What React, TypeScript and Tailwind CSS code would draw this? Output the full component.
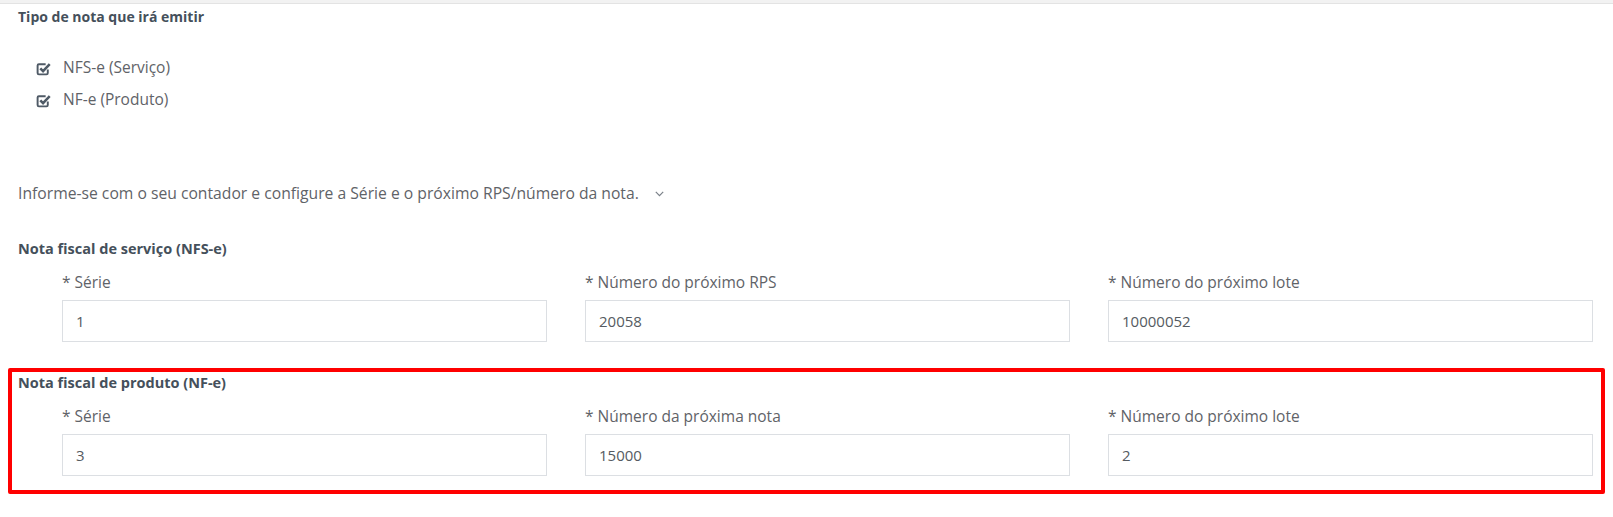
import React from 'react';

const CheckIcon = () => (
  <svg width="15" height="15" viewBox="0 0 14 14" fill="none" className="shrink-0">
    <path
      d="M11 8v3.3a1.2 1.2 0 0 1-1.2 1.2H2.7a1.2 1.2 0 0 1-1.2-1.2V4.2A1.2 1.2 0 0 1 2.7 3H9"
      stroke="#4f5a66"
      strokeWidth="1.8"
    />
    <path d="M4 6.8l2.6 2.6L12.8 3" stroke="#4f5a66" strokeWidth="2.4" />
  </svg>
);

type Field = { label: string; value: string };

const Section = ({ title, fields, highlight }: { title: string; fields: Field[]; highlight?: boolean }) => (
  <div
    className={`-mx-[10px] px-[6px] pt-[1px] pb-[14px] border-4 ${
      highlight ? 'border-[#ff0000] rounded-[2px]' : 'border-transparent'
    }`}
  >
    <h4 className="font-bold text-[14.5px] leading-[20px] text-[#45505b]">{title}</h4>
    <div className="grid grid-cols-3 gap-x-[38px] pl-[44px] pr-[2px] mt-[13px]">
      {fields.map((f) => (
        <div key={f.label}>
          <div className="leading-[20px] text-[#5f6368]">* {f.label}</div>
          <div className="mt-[8px] h-[42px] border border-[#dcdfe3] flex items-center px-[13px] text-[15px] text-[#555b61]">
            {f.value}
          </div>
        </div>
      ))}
    </div>
  </div>
);

export default function App() {
  return (
    <div className="w-[1613px] h-[517px] bg-white overflow-hidden font-['Open_Sans',sans-serif] text-[15.5px] text-[#5f6368]">
      <div className="h-[4px] bg-[#f2f2f2] border-b border-[#e3e3e3]" />
      <div className="px-[18px]">
        <h3 className="mt-[3px] font-bold text-[14px] leading-[20px] text-[#45505b]">Tipo de nota que irá emitir</h3>

        <div className="mt-[25px] pl-[18px]">
          <label className="h-[32px] flex items-center gap-[12px]">
            <CheckIcon />
            <span>NFS-e (Serviço)</span>
          </label>
          <label className="h-[32px] flex items-center gap-[12px]">
            <CheckIcon />
            <span>NF-e (Produto)</span>
          </label>
        </div>

        <div className="mt-[67px] flex items-center leading-[20px] text-[15.7px]">
          <span>Informe-se com o seu contador e configure a Série e o próximo RPS/número da nota.</span>
          <svg width="9" height="6" viewBox="0 0 9 6" className="ml-[16px] mt-[1px]" fill="none">
            <path d="M0.8 0.8L4.5 4.6L8.2 0.8" stroke="#7a8088" strokeWidth="1.2" />
          </svg>
        </div>

        <div className="mt-[31px]">
          <Section
            title="Nota fiscal de serviço (NFS-e)"
            fields={[
              { label: 'Série', value: '1' },
              { label: 'Número do próximo RPS', value: '20058' },
              { label: 'Número do próximo lote', value: '10000052' },
            ]}
          />
        </div>

        <div className="mt-[8px]">
          <Section
            highlight
            title="Nota fiscal de produto (NF-e)"
            fields={[
              { label: 'Série', value: '3' },
              { label: 'Número da próxima nota', value: '15000' },
              { label: 'Número do próximo lote', value: '2' },
            ]}
          />
        </div>
      </div>
    </div>
  );
}
